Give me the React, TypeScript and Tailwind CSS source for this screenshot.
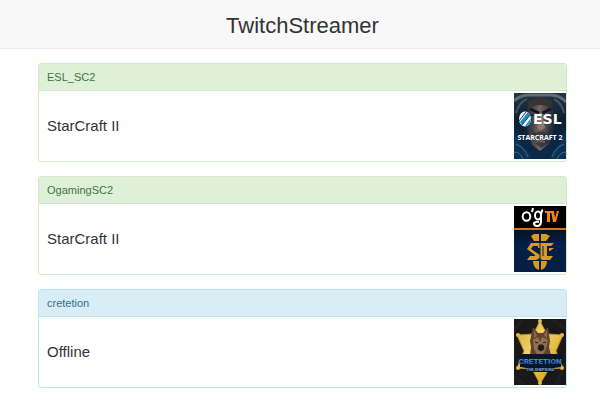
type Channel = {
  name: string;
  status: string;
  online: boolean;
  Logo: () => React.JSX.Element;
};

const logoSize = "block h-[66px] w-[52px] shrink-0";

function EslLogo() {
  return (
    <svg className={logoSize} viewBox="0 0 52 66" role="img" aria-label="ESL StarCraft 2">
      <defs>
        <linearGradient id="eslFace">
          <stop offset="0" stopColor="#17232f" />
          <stop offset="0.5" stopColor="#74675f" />
          <stop offset="0.75" stopColor="#3f4146" />
          <stop offset="1" stopColor="#122134" />
        </linearGradient>
        <linearGradient id="eslSky" x2="0" y2="1">
          <stop offset="0" stopColor="#263442" />
          <stop offset="0.4" stopColor="#0c2036" />
          <stop offset="1" stopColor="#0a2a4b" />
        </linearGradient>
      </defs>
      <rect width="52" height="66" fill="url(#eslSky)" />
      <path d="M0 8Q6 2 16 2H37Q47 3 52 9" fill="none" stroke="#5d6d72" strokeWidth="3" />
      <path d="M2 20Q5 9 13 6M50 20Q48 10 40 6" fill="none" stroke="#3c5868" strokeWidth="2" />
      <path d="M14 9Q26 3 39 9L41 32L35 51L26 58L18 52L11 33Z" fill="url(#eslFace)" />
      <path d="M15 8Q26 2 38 8L35 14Q26 10 18 14Z" fill="#39332f" />
      <path d="M16 16l9 4M37 16l-9 4" stroke="#11161d" strokeWidth="3" />
      <path d="M17 22h6M30 22h6" stroke="#1c222a" strokeWidth="2" />
      <path d="M26 20l-3 15 3 2 5-2-3-15Z" fill="#8b7a6c" />
      <path d="M17 35l4 15 6 5 7-5 4-15-5 5-6-2-6 2Z" fill="#282c32" opacity="0.7" />
      <path d="M21 49q5-2 10 0" fill="none" stroke="#6b5d57" strokeWidth="2" />
      <path d="M0 36q5 14 14 22l4 8H0ZM52 36q-5 14-13 22l-4 8h17Z" fill="#0b3157" />
      <path d="M2 51q8 3 12 13M50 51q-8 3-12 13M0 59q6 0 9 7M52 59q-6 0-9 7" fill="none" stroke="#506a78" />
      <ellipse cx="11" cy="26" rx="6" ry="7.5" fill="#f7fbfd" />
      <path d="M6 29L14 19l2 3-8 10ZM11 33l6-8-1 5-3 3Z" fill="#1591d0" />
      <path d="M5 28l7-9M8 32l9-11" stroke="#173a5c" />
      <text x="19" y="31" fill="#fff" fontFamily="DejaVu Sans, sans-serif" fontWeight="700" fontSize="14">ESL</text>
      <text x="26" y="47" textAnchor="middle" fill="#fff" fontFamily="Open Sans, sans-serif" fontWeight="700" fontSize="7">STARCRAFT 2</text>
    </svg>
  );
}

function OgamingLogo() {
  return (
    <svg className={logoSize} viewBox="0 0 52 66" role="img" aria-label="O'Gaming TV">
      <defs>
        <linearGradient id="ogBlue" x2="0" y2="1">
          <stop offset="0" stopColor="#071224" />
          <stop offset="0.4" stopColor="#03204a" />
          <stop offset="1" stopColor="#061e42" />
        </linearGradient>
      </defs>
      <rect width="52" height="66" fill="#000" />
      <rect y="23" width="52" height="43" fill="url(#ogBlue)" />
      <rect y="22" width="52" height="2" fill="#d87318" />
      <g fill="none" stroke="#fff" strokeWidth="2">
        <ellipse cx="12.500" cy="10.500" rx="3.800" ry="4.200" />
        <ellipse cx="24" cy="9.500" rx="3" ry="4" />
        <path d="M29 4q-2 1-2 5v6q0 5-4 5-3 0-3-3 2-2 5-1M19 2l-1 4" />
      </g>
      <path d="M31 5h7v2h-2v9h-3V7h-2ZM37 5h3l1 7 2-7h2l-3 11h-3Z" fill="#ee8618" />
      <g fill="#d99a20">
        <path d="M17 30l3-2h5v7h-5ZM27 28h5l4 2-4 5h-5Z" />
        <path d="M13 43l4-6h9v3h-7l-2 3 9 6v3l-4 2h-9l3-4h5v-1Z" />
        <path d="M24 37h16l-3 3h-4v10h6l-3 4h-8l-2-2V42h-2Z" />
        <path d="M35 42h5l-4 3h-1Z" />
        <path d="M19 55h6v9q-6-2-6-9ZM27 55h6q0 7-6 9Z" />
      </g>
      <path d="M26 27v37M29 40v10" stroke="#061e42" />
    </svg>
  );
}

function CretetionLogo() {
  return (
    <svg className={logoSize} viewBox="0 0 52 66" role="img" aria-label="Cretetion The Shepking">
      <defs>
        <linearGradient id="starGold" x2="1" y2="1">
          <stop offset="0" stopColor="#d5aa36" />
          <stop offset="0.4" stopColor="#f0d46c" />
          <stop offset="0.7" stopColor="#dfb332" />
          <stop offset="1" stopColor="#e8c344" />
        </linearGradient>
        <linearGradient id="nameBlue" x2="0" y2="1">
          <stop offset="0" stopColor="#5b9edc" />
          <stop offset="1" stopColor="#1b579e" />
        </linearGradient>
      </defs>
      <rect width="52" height="66" fill="#191919" />
      <path d="M0 12L9 0M42 66l10-22M0 57l11 9M38 0l14 10" stroke="#1f1f1f" strokeWidth="3" />
      <path d="M26 1Q30 12 35 15L49 16L42 32L49 49L35 50L26 65L18 50L3 49L10 32L3 16L18 15Q23 10 26 1Z" fill="url(#starGold)" stroke="#b78c26" />
      <g fill="#e6b742">
        <circle cx="26" cy="2" r="2" />
        <circle cx="4" cy="16" r="2" />
        <circle cx="48" cy="16" r="2" />
        <circle cx="4" cy="49" r="2" />
        <circle cx="48" cy="49" r="2" />
        <circle cx="26" cy="64" r="2" />
      </g>
      <path d="M19 8l5 6h5l5-6 2 14-1 6 2 8H16l1-8-1-6Z" fill="#60442f" />
      <path d="M20 11l3 5-3 4ZM33 11l-3 5 3 4Z" fill="#8b6551" />
      <path d="M19 21l5-3 2 5 2-5 6 3-2 9-3 5h-6l-3-5Z" fill="#92704e" />
      <path d="M21 23l3 1M32 23l-3 1M25 26h4l1 4-3 2-3-2Z" fill="#211b18" stroke="#211b18" />
      <path d="M5 36l4-1h36l3 1-1 12-7 1-1 4H13l-1-4-6-1Z" fill="#08152b" />
      <text x="26" y="45" textAnchor="middle" fill="url(#nameBlue)" fontFamily="Roboto, sans-serif" fontWeight="900" fontSize="8">CRETETION</text>
      <text x="26" y="52" textAnchor="middle" fill="#88a6cd" fontFamily="Roboto, sans-serif" fontWeight="700" fontSize="4">THE SHEPKING</text>
    </svg>
  );
}

const channels: Channel[] = [
  { name: "ESL_SC2", status: "StarCraft II", online: true, Logo: EslLogo },
  { name: "OgamingSC2", status: "StarCraft II", online: true, Logo: OgamingLogo },
  { name: "cretetion", status: "Offline", online: false, Logo: CretetionLogo },
];

function ChannelPanel({ name, status, online, Logo }: Channel) {
  const border = online ? "border-[#d6e9c6]" : "border-[#bce8f1]";
  const heading = online ? "bg-[#dff0d8] text-[#3c763d]" : "bg-[#d9edf7] text-[#31708f]";
  return (
    <section className={`overflow-hidden rounded-[3px] border ${border}`}>
      <h2 className={`border-b px-2 py-1 text-[11px] leading-[18px] ${border} ${heading}`}>{name}</h2>
      <div className="flex items-center justify-between py-[2px] pl-2">
        <p className="text-[15px] leading-6 text-[#333]">{status}</p>
        <Logo />
      </div>
    </section>
  );
}

export default function App() {
  return (
    <div className="min-h-screen bg-white font-['Liberation_Sans',sans-serif]">
      <header className="border-b border-[#eee] bg-[#f8f8f8] pt-2 pr-[33px] pb-1 pl-[38px] text-center">
        <h1 className="text-[22px] leading-9 text-[#333]">TwitchStreamer</h1>
      </header>
      <main className="flex flex-col gap-[14px] pt-[14px] pr-[33px] pb-3 pl-[38px]">
        {channels.map((channel) => (
          <ChannelPanel key={channel.name} {...channel} />
        ))}
      </main>
    </div>
  );
}
